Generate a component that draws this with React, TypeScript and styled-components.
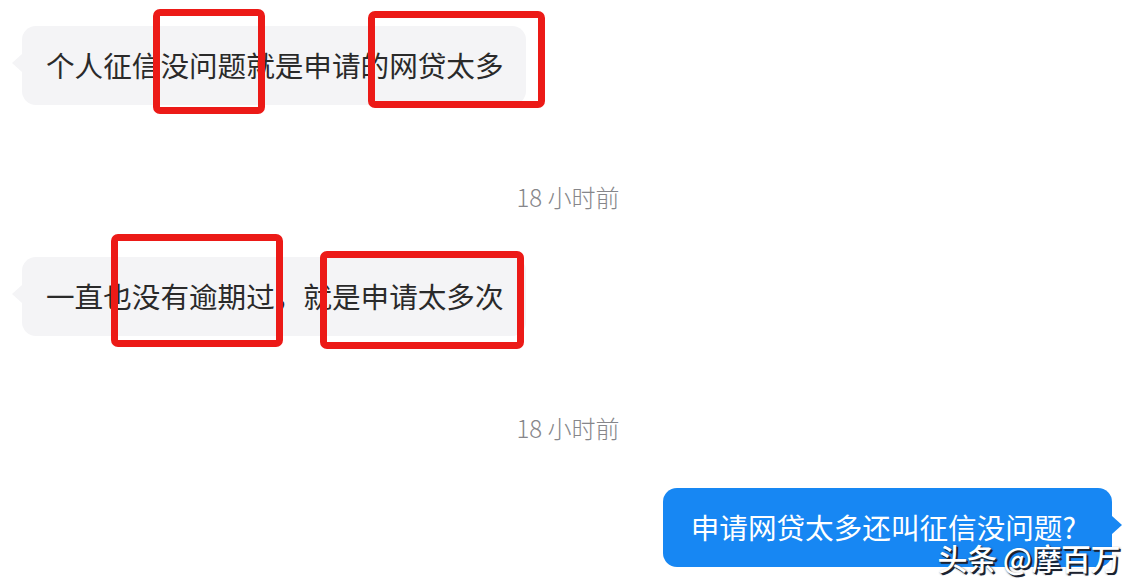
import React from "react";
import styled, { createGlobalStyle } from "styled-components";

const GlobalStyle = createGlobalStyle`
    html, body {
        margin: 0;
        padding: 0;
        background: #ffffff;
    }
    body {
        font-family: "Noto Sans CJK SC", "Noto Sans", sans-serif;
    }
`;

interface MarkBox {
    left: number;
    top: number;
    width: number;
    height: number;
}

const marks: MarkBox[] = [
    { left: 153, top: 9, width: 112, height: 105 },
    { left: 368, top: 11, width: 177, height: 97 },
    { left: 111, top: 234, width: 172, height: 113 },
    { left: 320, top: 251, width: 204, height: 98 },
];

const App: React.FC = () => {
    return (
        <>
            <GlobalStyle />
            <Screen>
                <Row>
                    <Bubble side="left">个人征信没问题就是申请的网贷太多</Bubble>
                </Row>
                <Time>18 小时前</Time>
                <Row>
                    <Bubble side="left">一直也没有逾期过，就是申请太多次</Bubble>
                </Row>
                <Time>18 小时前</Time>
                <Row align="right">
                    <Bubble side="right">申请网贷太多还叫征信没问题?</Bubble>
                </Row>

                {marks.map((m, i) => (
                    <Mark key={i} style={{ left: m.left, top: m.top, width: m.width, height: m.height }} />
                ))}
                <Watermark>头条 @摩百万</Watermark>
            </Screen>
        </>
    );
};

const Screen = styled.div`
    position: relative;
    width: 1140px;
    height: 586px;
    overflow: hidden;
    background: #ffffff;
    padding-top: 26px;
    box-sizing: border-box;
    display: flex;
    flex-direction: column;
`;

const Row = styled.div<{ align?: "left" | "right" }>`
    display: flex;
    justify-content: ${({ align }) => (align === "right" ? "flex-end" : "flex-start")};
    padding: 0 28px 0 22px;
`;

const Bubble = styled.div<{ side: "left" | "right" }>`
    position: relative;
    height: 79px;
    display: flex;
    align-items: center;
    padding: 0 ${({ side }) => (side === "left" ? "22px 0 24px" : "36px 0 28px")};
    border-radius: 14px;
    font-size: 28.6px;
    line-height: 1;
    color: ${({ side }) => (side === "left" ? "#2a2a2a" : "#ffffff")};
    background: ${({ side }) => (side === "left" ? "#f4f4f6" : "#1787f3")};
    white-space: nowrap;

    &::before {
        content: "";
        position: absolute;
        top: 28px;
        ${({ side }) => (side === "left" ? "left: -10px;" : "right: -10px;")}
        border-top: 9px solid transparent;
        border-bottom: 9px solid transparent;
        ${({ side }) =>
            side === "left"
                ? "border-right: 10px solid #f4f4f6;"
                : "border-left: 10px solid #1787f3;"}
    }
`;

const Time = styled.div`
    height: 152px;
    box-sizing: border-box;
    padding: 30px 4px 0 0;
    display: flex;
    align-items: center;
    justify-content: center;
    font-family: "Noto Sans CJK SC", "Noto Sans", sans-serif;
    font-size: 24px;
    font-weight: 300;
    color: #86868a;
`;

const Mark = styled.div`
    position: absolute;
    box-sizing: border-box;
    border: 7px solid #ec1a17;
    border-radius: 7px;
`;

const Watermark = styled.div`
    position: absolute;
    right: 20px;
    bottom: 14px;
    font-size: 30px;
    line-height: 1;
    color: #ffffff;
    font-weight: 500;
    text-shadow: 2px 2px 0 #1b2230, 1px 1px 2px #1b2230;
    letter-spacing: -0.5px;
`;

export default App;
